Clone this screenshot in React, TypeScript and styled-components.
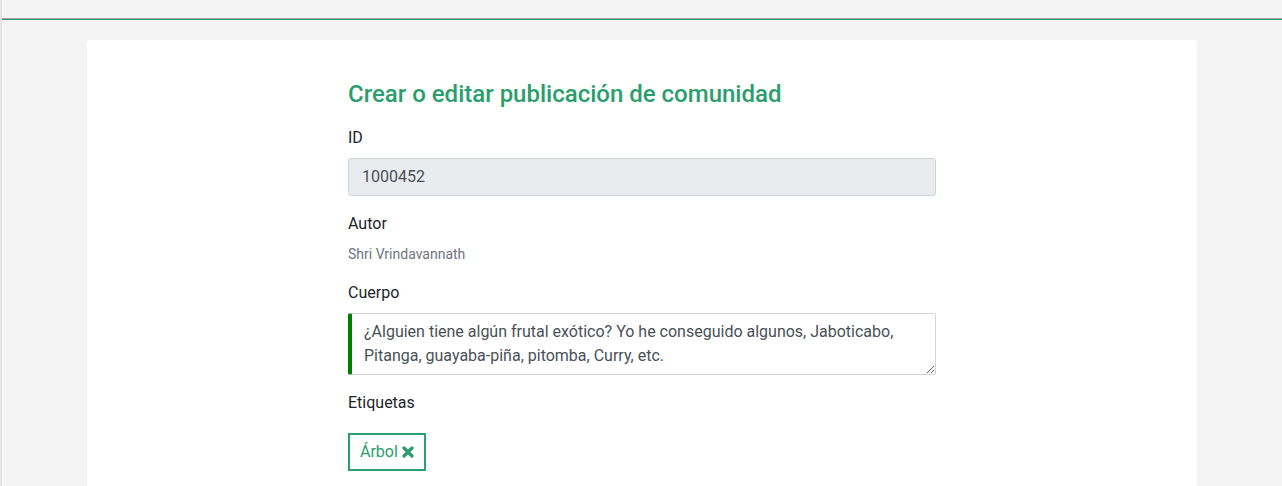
import React from "react";
import styled, { createGlobalStyle } from "styled-components";

const Global = createGlobalStyle`
  html, body { margin: 0; padding: 0; overflow: hidden; }
  body { background: #f4f4f4; font-family: Roboto, "Liberation Sans", sans-serif; color: #212529; }
  * { box-sizing: border-box; }
`;

const Shell = styled.div`
  min-height: 486px;
  border-left: 2px solid #e4e4e4;
  background: #f4f4f4;
`;

const TopBar = styled.header`
  height: 20px;
  border-bottom: 1px solid #2e9a6a;
  box-shadow: inset 0 -1px 0 #a3a3a3;
  background: #f4f4f4;
`;

const Container = styled.main`
  max-width: 1140px;
  margin: 0 auto;
  padding: 20px 15px 0;
`;

const Card = styled.section`
  background: #fff;
  border-radius: 3px;
  padding: 40px 0 40px;
  min-height: 480px;
`;

const Form = styled.form`
  width: 588px;
  margin: 0 auto;
`;

const Title = styled.h4`
  margin: 0 0 17px;
  font-size: 24px;
  font-weight: 500;
  line-height: 1.2;
  color: #2a9e6c;
`;

const Group = styled.div<{ $gap?: number }>`
  margin-bottom: ${(p) => p.$gap ?? 16}px;
`;

const Label = styled.label`
  display: block;
  font-size: 16px;
  line-height: 24px;
  margin-bottom: 8px;
  color: #212529;
`;

const Input = styled.input`
  display: block;
  width: 100%;
  height: 38px;
  padding: 6px 13px;
  font-family: inherit;
  font-size: 16px;
  line-height: 24px;
  color: #495057;
  background: #e9ecef;
  border: 1px solid #ced4da;
  border-radius: 3px;
  outline: none;
`;

const Muted = styled.div`
  font-size: 14px;
  line-height: 21px;
  color: #6c757d;
`;

const TextArea = styled.textarea`
  display: block;
  width: 100%;
  height: 62px;
  padding: 6px 12px;
  font-family: inherit;
  font-size: 16px;
  line-height: 24px;
  color: #495057;
  background: #fff;
  border: 1px solid #ced4da;
  border-left: 4px solid #008000;
  border-radius: 2px;
  resize: vertical;
  outline: none;
`;

const Tags = styled.div`
  display: flex;
  gap: 8px;
  padding-top: 10px;
`;

const Tag = styled.span`
  display: inline-flex;
  align-items: center;
  gap: 4px;
  height: 38px;
  padding: 0 10px;
  border: 2px solid #2a9e6c;
  color: #2a9e6c;
  font-size: 16px;
  line-height: 24px;
`;

const Close = () => (
  <svg width="12" height="12" viewBox="0 0 12 12" aria-hidden="true">
    <path d="M2 2 L10 10 M10 2 L2 10" stroke="#2a9e6c" strokeWidth="3.2" strokeLinecap="round" />
  </svg>
);

export default function App() {
  return (
    <>
      <Global />
      <Shell>
        <TopBar />
        <Container>
          <Card>
            <Form onSubmit={(e) => e.preventDefault()}>
              <Title>Crear o editar publicación de comunidad</Title>
              <Group>
                <Label>ID</Label>
                <Input value="1000452" readOnly disabled />
              </Group>
              <Group>
                <Label>Autor</Label>
                <Muted>Shri Vrindavannath</Muted>
              </Group>
              <Group>
                <Label>Cuerpo</Label>
                <TextArea defaultValue="¿Alguien tiene algún frutal exótico? Yo he conseguido algunos, Jaboticabo, Pitanga, guayaba-piña, pitomba, Curry, etc." />
              </Group>
              <Group>
                <Label>Etiquetas</Label>
                <Tags>
                  <Tag>
                    Árbol <Close />
                  </Tag>
                </Tags>
              </Group>
            </Form>
          </Card>
        </Container>
      </Shell>
    </>
  );
}
